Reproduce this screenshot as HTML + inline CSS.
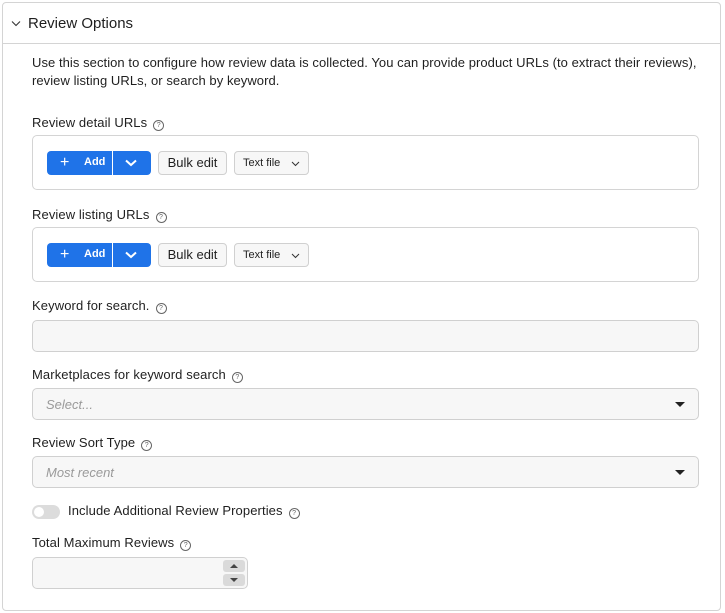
<!DOCTYPE html>
<html><head><meta charset="utf-8"><style>
*{box-sizing:border-box;margin:0;padding:0}
body{width:725px;height:613px;background:#fff;font-family:"Liberation Sans",sans-serif;color:#1f1f1f;position:relative;overflow:hidden}
.a{position:absolute}
.outer{left:2px;top:2px;width:719px;height:609px;border:1px solid #d4d4d4;border-radius:4px}
.div{left:3px;top:43px;width:717px;height:1px;background:#d4d4d4}
.lbl{font-size:13px;line-height:16px;left:32px;white-space:nowrap;letter-spacing:0.1px}
.q{display:inline-block;width:11px;height:11px;border:1px solid #666;border-radius:50%;font-size:7px;line-height:9px;text-align:center;vertical-align:0px;margin-left:6px;color:#666}
.box{left:32px;width:667px;height:55px;border:1px solid #d4d4d4;border-radius:5px}
.inp{left:32px;width:667px;height:32px;background:#f7f7f7;border:1px solid #d0d0d0;border-radius:5px}
.ph{font-size:13px;font-style:italic;color:#9a9a9a;left:13px;top:8px}
.tri{right:13px;top:13px;width:0;height:0;border-left:5px solid transparent;border-right:5px solid transparent;border-top:5px solid #222}
.add{height:24px;width:104px;background:#1f73e8;border-radius:4px;color:#fff;font-size:11px;font-weight:bold}
.btn{height:24px;background:#f7f7f7;border:1px solid #d0d0d0;border-radius:4px;font-size:13px;text-align:center;line-height:22px}
</style></head><body>
<div class="a outer"></div>
<div class="a div"></div>
<svg class="a" style="left:11px;top:20px" width="10" height="7"><path d="M1 1.5l4 4 4-4" stroke="#333" stroke-width="1.1" fill="none"/></svg>
<div class="a" style="left:28px;top:15px;font-size:15px;line-height:18px">Review Options</div>
<div class="a lbl" style="top:54px;line-height:18px;letter-spacing:0.06px">Use this section to configure how review data is collected. You can provide product URLs (to extract their reviews),<br>review listing URLs, or search by keyword.</div>

<div class="a lbl" style="top:115px">Review detail URLs<span class="q">?</span></div>
<div class="a box" style="top:135px"></div>
<div class="a lbl" style="top:207px">Review listing URLs<span class="q">?</span></div>
<div class="a box" style="top:227px"></div>

<div class="a add" style="left:47px;top:151px"><span class="a" style="left:13px;top:3px;font-size:16px;font-weight:normal">+</span><span class="a" style="left:37px;top:5px">Add</span><span class="a" style="left:65px;top:0;width:1px;height:24px;background:#fff"></span><svg class="a" style="left:78px;top:8px" width="12" height="8"><path d="M1 1.5l5 4.5 5-4.5" stroke="#fff" stroke-width="2" fill="none"/></svg></div>
<div class="a btn" style="left:158px;top:151px;width:69px">Bulk edit</div>
<div class="a btn" style="left:234px;top:151px;width:75px;font-size:11px;text-align:left;padding-left:8px">Text file<svg class="a" style="left:56px;top:9px" width="9" height="6"><path d="M1 1l3.5 3.5L8 1" stroke="#333" stroke-width="1" fill="none"/></svg></div>

<div class="a add" style="left:47px;top:243px"><span class="a" style="left:13px;top:3px;font-size:16px;font-weight:normal">+</span><span class="a" style="left:37px;top:5px">Add</span><span class="a" style="left:65px;top:0;width:1px;height:24px;background:#fff"></span><svg class="a" style="left:78px;top:8px" width="12" height="8"><path d="M1 1.5l5 4.5 5-4.5" stroke="#fff" stroke-width="2" fill="none"/></svg></div>
<div class="a btn" style="left:158px;top:243px;width:69px">Bulk edit</div>
<div class="a btn" style="left:234px;top:243px;width:75px;font-size:11px;text-align:left;padding-left:8px">Text file<svg class="a" style="left:56px;top:9px" width="9" height="6"><path d="M1 1l3.5 3.5L8 1" stroke="#333" stroke-width="1" fill="none"/></svg></div>

<div class="a lbl" style="top:298px">Keyword for search.<span class="q">?</span></div>
<div class="a inp" style="top:320px"></div>
<div class="a lbl" style="top:367px">Marketplaces for keyword search<span class="q">?</span></div>
<div class="a inp" style="top:388px"><span class="a ph">Select...</span><span class="a tri"></span></div>
<div class="a lbl" style="top:435px">Review Sort Type<span class="q">?</span></div>
<div class="a inp" style="top:456px"><span class="a ph">Most recent</span><span class="a tri"></span></div>

<div class="a" style="left:32px;top:505px;width:28px;height:14px;border-radius:7px;background:#dcdcdc"><div class="a" style="left:2px;top:2px;width:10px;height:10px;border-radius:50%;background:#fff"></div></div>
<div class="a lbl" style="left:68px;top:503px">Include Additional Review Properties<span class="q">?</span></div>
<div class="a lbl" style="top:535px">Total Maximum Reviews<span class="q">?</span></div>
<div class="a" style="left:32px;top:557px;width:216px;height:32px;background:#f7f7f7;border:1px solid #d0d0d0;border-radius:5px">
<div class="a" style="left:190px;top:2px;width:22px;height:12px;background:#dadada;border-radius:3px"><div class="a" style="left:7px;top:4px;border-left:4px solid transparent;border-right:4px solid transparent;border-bottom:4px solid #444"></div></div>
<div class="a" style="left:190px;top:16px;width:22px;height:12px;background:#dadada;border-radius:3px"><div class="a" style="left:7px;top:4px;border-left:4px solid transparent;border-right:4px solid transparent;border-top:4px solid #444"></div></div>
</div>
</body></html>
